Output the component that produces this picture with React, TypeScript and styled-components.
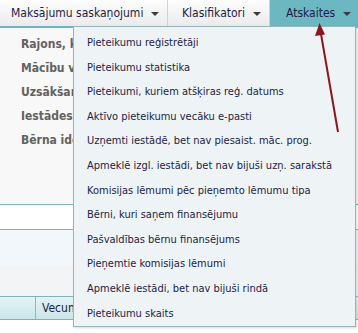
import React from "react";
import styled, { createGlobalStyle } from "styled-components";

const GlobalStyle = createGlobalStyle`
  html, body {
    margin: 0;
    padding: 0;
    background: #ffffff;
  }
  body {
    font-family: "DejaVu Sans Condensed", "DejaVu Sans", sans-serif;
    width: 358px;
    height: 333px;
    overflow: hidden;
  }
`;

const Page = styled.div`
  position: relative;
  width: 358px;
  height: 333px;
  overflow: hidden;
  background: #ffffff;
`;

const NavBar = styled.div`
  display: flex;
  height: 26px;
  background: linear-gradient(#fdfdfd, #ebebeb);
  border-bottom: 2px solid #6bb7c2;
`;

type NavItemProps = {
  active?: boolean;
  width: number;
  pad: number;
};
const NavItem = styled.div<NavItemProps>`
  display: flex;
  align-items: center;
  gap: 8px;
  box-sizing: border-box;
  width: ${({ width }) => width}px;
  padding-left: ${({ pad }) => pad}px;
  font-size: 12px;
  color: #1d1d45;
  white-space: nowrap;
  background: ${({ active }) => (active ? "#6bb7c2" : "transparent")};
  border-right: 1px solid ${({ active }) => (active ? "#6bb7c2" : "#d2d2d2")};
`;

const Caret = styled.span`
  width: 0;
  height: 0;
  border-left: 4px solid transparent;
  border-right: 4px solid transparent;
  border-top: 4px solid #3a3a3a;
  margin-top: 2px;
`;

const Panel = styled.div`
  display: flex;
  flex-direction: column;
  background: #f8f8f8;
  padding: 4px 0 0 21px;
  height: 177px;
  box-sizing: border-box;
  border-bottom: 1px solid #7fb3b8;
`;

// the open menu covers the right part of these labels
const Label = styled.div`
  width: 52px;
  overflow: hidden;
  height: 24px;
  line-height: 24px;
  font-size: 12px;
  font-weight: bold;
  color: #626262;
  white-space: nowrap;
`;

const WhiteRow = styled.div`
  height: 24px;
  background: #ffffff;
  border-bottom: 1px solid #7fb3b8;
`;

const LightArea = styled.div`
  height: 36px;
  background: #f1f7fa;
`;

const GreyArea = styled.div`
  height: 30px;
  background: #f2f4f5;
  border-bottom: 1px solid #7fb3b8;
`;

const TableHead = styled.div`
  display: grid;
  grid-template-columns: 36px 37px;
  height: 22px;
  background: linear-gradient(#e3f3f5, #c9e6ea);
  border-bottom: 1px solid #7fb3b8;
`;

const HeadCell = styled.div`
  display: flex;
  align-items: center;
  padding-left: 6px;
  overflow: hidden;
  white-space: nowrap;
  font-size: 12px;
  color: #1d1d45;
  border-right: 1px solid #8cb8bd;
  &:last-child {
    border-right: none;
  }
`;

const Menu = styled.div`
  position: absolute;
  left: 73px;
  top: 26px;
  width: 283px;
  height: 301px;
  box-sizing: border-box;
  padding-top: 4px;
  background: #eef3f5;
  border: 1px solid #98b6ba;
  box-shadow: 1px 1px 2px rgba(0, 0, 0, 0.15);
`;

const MenuItem = styled.div`
  height: 24.6px;
  line-height: 24.6px;
  padding-left: 13px;
  font-size: 11px;
  color: #1d1d45;
  white-space: nowrap;
`;

const Pointer = styled.svg`
  position: absolute;
  left: 0;
  top: 0;
  pointer-events: none;
`;

const menuItems = [
  "Pieteikumu reģistrētāji",
  "Pieteikumu statistika",
  "Pieteikumi, kuriem atšķiras reģ. datums",
  "Aktīvo pieteikumu vecāku e-pasti",
  "Uzņemti iestādē, bet nav piesaist. māc. prog.",
  "Apmeklē izgl. iestādi, bet nav bijuši uzņ. sarakstā",
  "Komisijas lēmumi pēc pieņemto lēmumu tipa",
  "Bērni, kuri saņem finansējumu",
  "Pašvaldības bērnu finansējums",
  "Pieņemtie komisijas lēmumi",
  "Apmeklē iestādi, bet nav bijuši rindā",
  "Pieteikumu skaits",
];

const labels = [
  "Rajons, kurā atrodas",
  "Mācību valoda",
  "Uzsākšanas datums",
  "Iestādes veids",
  "Bērna identifikators",
];

export default function App() {
  return (
    <Page>
      <GlobalStyle />
      <NavBar>
        <NavItem width={168} pad={11}>
          Maksājumu saskaņojumi <Caret />
        </NavItem>
        <NavItem width={102} pad={14}>
          Klasifikatori <Caret />
        </NavItem>
        <NavItem width={88} pad={16} active>
          Atskaites <Caret />
        </NavItem>
      </NavBar>
      <Panel>
        {labels.map((l) => (
          <Label key={l}>{l}</Label>
        ))}
      </Panel>
      <WhiteRow />
      <LightArea />
      <GreyArea />
      <TableHead>
        <HeadCell />
        <HeadCell>Vecums</HeadCell>
      </TableHead>
      <Menu>
        {menuItems.map((item) => (
          <MenuItem key={item}>{item}</MenuItem>
        ))}
      </Menu>
      <Pointer width="358" height="333" viewBox="0 0 358 333">
        <line x1="338" y1="132" x2="321" y2="34" stroke="#8a1620" strokeWidth="2" />
        <polygon points="319.5,23 315,36 325,34.5" fill="#8a1620" />
      </Pointer>
    </Page>
  );
}
